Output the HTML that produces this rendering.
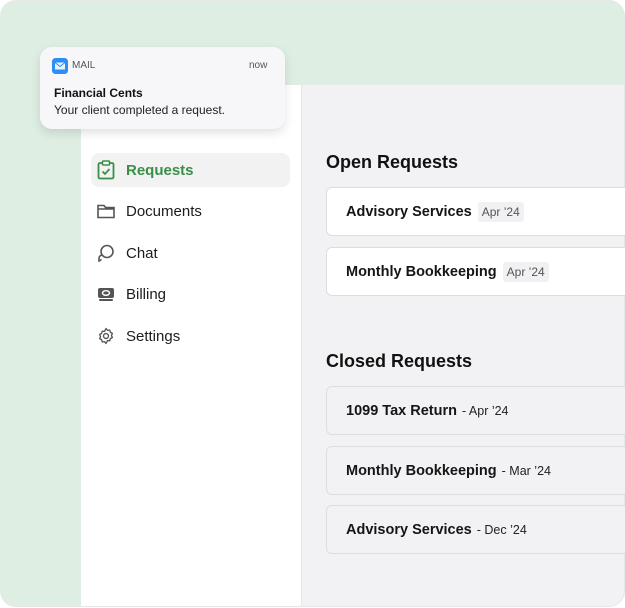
<!DOCTYPE html>
<html><head><style>
*{margin:0;padding:0;box-sizing:border-box}
body{width:625px;height:608px;background:#fff;font-family:"Liberation Sans",sans-serif;overflow:hidden;position:relative}
.frame{position:absolute;left:0;top:0;width:625px;height:607px;border-radius:16px;background:#deeee2;overflow:hidden;border:1px solid #e6e8e8;border-left:none}
.side{position:absolute;left:81px;top:84px;width:220px;height:530px;background:#fff}
.main{position:absolute;left:301px;top:84px;width:330px;height:530px;background:#f2f2f4;border-left:1px solid #e8e8ea}
.item{position:absolute;left:91px;width:199px;height:34px;border-radius:8px;font-size:15px;color:#1c1c1e;display:flex;align-items:center;padding-left:6px}
.item svg{margin-right:11px}
.item.act{background:#f2f2f3;color:#3a8f47;font-weight:bold}
h2{position:absolute;left:326px;font-size:18px;font-weight:bold;color:#111}
.card{position:absolute;left:326px;width:310px;height:49px;border:1px solid #dcdde0;border-radius:6px;background:#fff;display:flex;align-items:center;padding-left:19px;font-size:14.5px;font-weight:bold;color:#151515}
.card.c{background:#f2f2f4}
.tag{font-weight:normal;font-size:12px;color:#555;background:#f1f1f4;border-radius:3px;padding:3px 4px;margin-left:6px}
.d{font-weight:normal;font-size:12.5px;color:#222;margin-left:5px}
.notif{position:absolute;left:40px;top:47px;width:245px;height:82px;border-radius:12px;background:#f7f7fa;box-shadow:0 4px 10px rgba(0,0,0,.12)}
</style></head><body>
<div class="frame">
<div class="side"></div>
<div class="main"></div>
</div>
<div class="item act" style="top:153px"><svg width="18" height="20" viewBox="0 0 18 20"><rect x="1.5" y="3" width="15" height="15.5" rx="1.5" fill="none" stroke="#3a8f47" stroke-width="1.8"/><rect x="5.5" y="1" width="7" height="4" rx="1" fill="#fff" stroke="#3a8f47" stroke-width="1.6"/><path d="M5.5 11.5l2.5 2.5 4.5-5" fill="none" stroke="#3a8f47" stroke-width="1.8"/></svg>Requests</div>
<div class="item" style="top:194px"><svg width="18" height="16" viewBox="0 0 18 16"><path d="M1 2.5h6l1.5 2H17v10H1z M1 6h16" fill="none" stroke="#555" stroke-width="1.6"/></svg>Documents</div>
<div class="item" style="top:236px"><svg width="18" height="18" viewBox="0 0 18 18"><circle cx="10" cy="7.5" r="6" fill="none" stroke="#555" stroke-width="1.6"/><path d="M5 11c-2 .5-3 2-3 3.5V17l2.5-1.5" fill="none" stroke="#555" stroke-width="1.6"/></svg>Chat</div>
<div class="item" style="top:277px"><svg width="18" height="16" viewBox="0 0 18 16"><rect x="1" y="2" width="16" height="10" rx="2" fill="#555"/><ellipse cx="9" cy="7" rx="3.5" ry="2.3" fill="none" stroke="#fff" stroke-width="1.4"/><rect x="2" y="13" width="14" height="2" rx="1" fill="#555"/></svg>Billing</div>
<div class="item" style="top:319px"><svg width="18" height="18" viewBox="0 0 24 24"><path d="M12 2l2 2.5 3-.5.8 3 2.7 1.5-1.2 2.8 1.2 2.7-2.7 1.5-.8 3-3-.5L12 22l-2-2.5-3 .5-.8-3-2.7-1.5 1.2-2.7-1.2-2.8 2.7-1.5.8-3 3 .5z" fill="none" stroke="#555" stroke-width="1.8" stroke-linejoin="round"/><circle cx="12" cy="12" r="3.3" fill="none" stroke="#555" stroke-width="1.8"/></svg>Settings</div>
<h2 style="top:152px">Open Requests</h2>
<div class="card" style="top:187px">Advisory Services<span class="tag">Apr ’24</span></div>
<div class="card" style="top:247px">Monthly Bookkeeping<span class="tag">Apr ’24</span></div>
<h2 style="top:351px">Closed Requests</h2>
<div class="card c" style="top:386px">1099 Tax Return<span class="d">- Apr ’24</span></div>
<div class="card c" style="top:446px">Monthly Bookkeeping<span class="d">- Mar ’24</span></div>
<div class="card c" style="top:505px">Advisory Services<span class="d">- Dec ’24</span></div>
<div class="notif">
<svg style="position:absolute;left:12px;top:11px" width="16" height="16" viewBox="0 0 16 16"><rect width="16" height="16" rx="3.5" fill="#2f8ef5"/><rect x="3" y="4.5" width="10" height="7" fill="#e8f2ff"/><path d="M3 4.5l5 4 5-4" fill="none" stroke="#2f8ef5" stroke-width="1"/></svg>
<div style="position:absolute;left:32px;top:13px;font-size:10px;color:#555">MAIL</div>
<div style="position:absolute;left:209px;top:13px;font-size:10px;color:#555">now</div>
<div style="position:absolute;left:14px;top:39px;font-size:12px;font-weight:bold;color:#111">Financial Cents</div>
<div style="position:absolute;left:14px;top:56px;font-size:12px;color:#222">Your client completed a request.</div>
</div>
</body></html>
